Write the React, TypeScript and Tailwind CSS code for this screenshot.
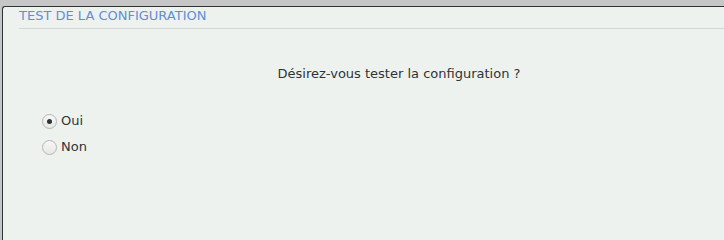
import { useState } from "react";

const Radio = ({ checked, label, onClick }: { checked: boolean; label: string; onClick: () => void }) => (
  <label className="flex items-center gap-[4px] h-[26px] cursor-pointer" onClick={onClick}>
    <span className="w-[15px] h-[15px] rounded-full border border-[#b4b6b3] bg-gradient-to-b from-[#f7f7f7] to-[#e8e8e7] flex items-center justify-center">
      {checked && <span className="w-[5px] h-[5px] rounded-full bg-[#2e3436]" />}
    </span>
    <span>{label}</span>
  </label>
);

const App = () => {
  const [value, setValue] = useState("oui");

  return (
    <div className="w-[724px] h-[240px] bg-[#c6c6c6] pt-[6px] pl-[2px] overflow-hidden" style={{ fontFamily: '"DejaVu Sans", sans-serif' }}>
      <div className="h-full bg-[#eef2ef] border-t border-l border-[#2e3436] rounded-tl-[3px] text-[#2e3436] text-[13px]">
        <div className="pl-[16px]">
          <h1 className="text-[#5c8fdb] text-[13px] leading-[16px] h-[21px] pt-[1px]">TEST DE LA CONFIGURATION</h1>
          <div className="h-px bg-[#d3d6d3]" />
        </div>
        <p className="text-center mt-[37px] pl-[71px] leading-[16px]">Désirez-vous tester la configuration ?</p>
        <div className="mt-[26px] pl-[39px]">
          <Radio checked={value === "oui"} label="Oui" onClick={() => setValue("oui")} />
          <Radio checked={value === "non"} label="Non" onClick={() => setValue("non")} />
        </div>
      </div>
    </div>
  );
};

export default App;
